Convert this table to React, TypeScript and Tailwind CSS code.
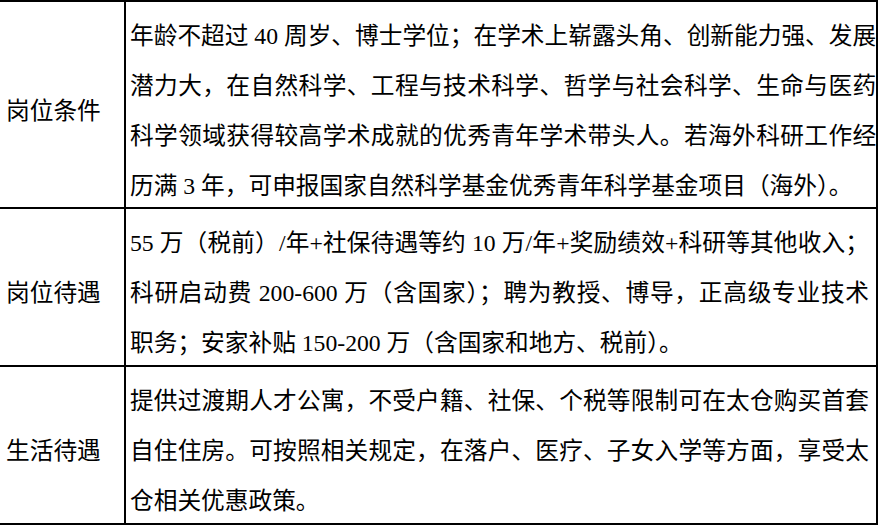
const rows = [
  {
    label: '岗位条件',
    height: 'h-[207px]',
    lines: [
      '年龄不超过 40 周岁、博士学位；在学术上崭露头角、创新能力强、发展',
      '潜力大，在自然科学、工程与技术科学、哲学与社会科学、生命与医药',
      '科学领域获得较高学术成就的优秀青年学术带头人。若海外科研工作经',
      '历满 3 年，可申报国家自然科学基金优秀青年科学基金项目（海外）。',
    ],
  },
  {
    label: '岗位待遇',
    height: 'h-[158px]',
    lines: [
      '55 万（税前）/年+社保待遇等约 10 万/年+奖励绩效+科研等其他收入；',
      '科研启动费 200-600 万（含国家）；聘为教授、博导，正高级专业技术',
      '职务；安家补贴 150-200 万（含国家和地方、税前）。',
    ],
  },
  {
    label: '生活待遇',
    height: 'h-[158px]',
    lines: [
      '提供过渡期人才公寓，不受户籍、社保、个税等限制可在太仓购买首套',
      '自住住房。可按照相关规定，在落户、医疗、子女入学等方面，享受太',
      '仓相关优惠政策。',
    ],
  },
];

export default function App() {
  return (
    <div className="min-h-screen bg-white">
      <div className="w-[878px] border-t-2 border-r-2 border-black text-black text-[23.7px] font-['Liberation_Serif','Noto_Sans_CJK_SC',serif]">
        {rows.map((row) => (
          <div key={row.label} className={`flex border-b-2 border-black ${row.height}`}>
            <div className="w-[124px] shrink-0 flex items-center pl-[6px] pt-[12px] leading-[50px]">
              {row.label}
            </div>
            <div className="flex-1 border-l-2 border-black pl-[4px] pr-[7px] pt-[9px] leading-[50px]">
              {row.lines.map((line, i) => (
                <div
                  key={i}
                  className={
                    i < row.lines.length - 1
                      ? 'whitespace-nowrap [text-align-last:justify] text-justify'
                      : 'whitespace-nowrap'
                  }
                >
                  {line}
                </div>
              ))}
            </div>
          </div>
        ))}
      </div>
    </div>
  );
}
